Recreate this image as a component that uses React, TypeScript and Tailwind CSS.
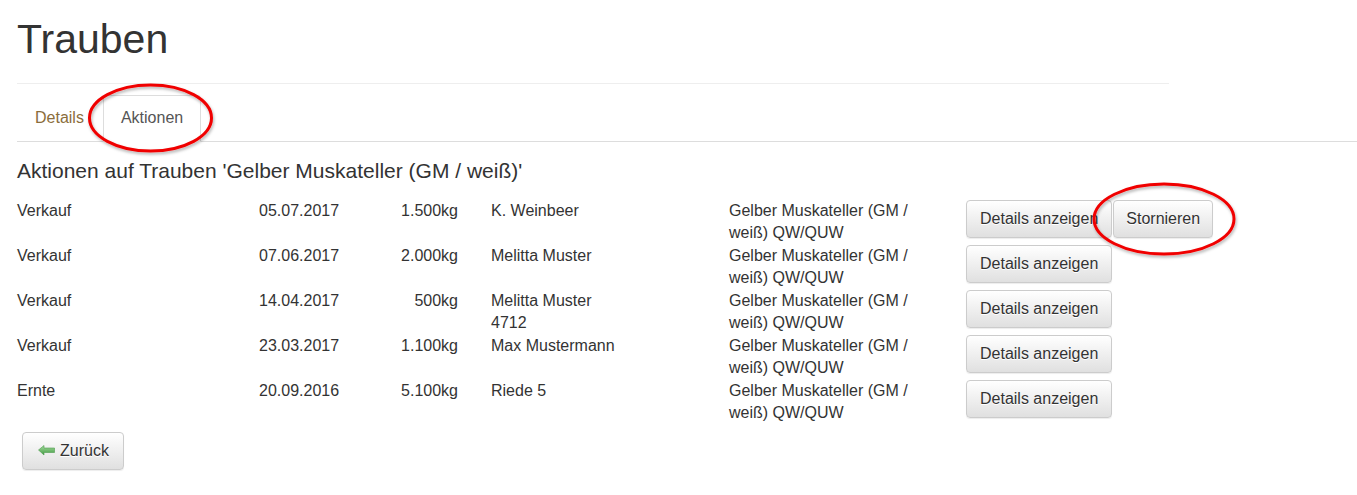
import React from 'react';

interface Aktion {
  art: string;
  datum: string;
  menge: string;
  partner: string[];
  sorte: string;
  stornierbar?: boolean;
}

const aktionen: Aktion[] = [
  { art: 'Verkauf', datum: '05.07.2017', menge: '1.500kg', partner: ['K. Weinbeer'], sorte: 'Gelber Muskateller (GM / weiß) QW/QUW', stornierbar: true },
  { art: 'Verkauf', datum: '07.06.2017', menge: '2.000kg', partner: ['Melitta Muster'], sorte: 'Gelber Muskateller (GM / weiß) QW/QUW' },
  { art: 'Verkauf', datum: '14.04.2017', menge: '500kg', partner: ['Melitta Muster', '4712'], sorte: 'Gelber Muskateller (GM / weiß) QW/QUW' },
  { art: 'Verkauf', datum: '23.03.2017', menge: '1.100kg', partner: ['Max Mustermann'], sorte: 'Gelber Muskateller (GM / weiß) QW/QUW' },
  { art: 'Ernte', datum: '20.09.2016', menge: '5.100kg', partner: ['Riede 5'], sorte: 'Gelber Muskateller (GM / weiß) QW/QUW' },
];

// bootstrap-theme style default button
const btn =
  'inline-flex items-center rounded-[4px] border border-[#ccc] bg-gradient-to-b from-white to-[#e0e0e0] py-[7px] text-[16px] leading-[22px] text-[#333] shadow-[inset_0_1px_0_rgba(255,255,255,0.15),0_1px_1px_rgba(0,0,0,0.075)] [text-shadow:0_1px_0_#fff]';

const ArrowLeft = () => (
  <svg width="17" height="11" viewBox="0 0 17 11" className="mr-[5px]">
    <defs>
      <linearGradient id="arrowGreen" x1="0" y1="0" x2="0" y2="1">
        <stop offset="0" stopColor="#a6dca0" />
        <stop offset="1" stopColor="#3f9a3f" />
      </linearGradient>
    </defs>
    <polygon points="0.5,5 6,0.5 6,3 16.5,3 16.5,7.5 6,7.5 6,10" fill="url(#arrowGreen)" stroke="#4d9b4d" strokeWidth="0.6" />
  </svg>
);

const Markierungen = () => (
  <svg className="pointer-events-none absolute left-0 top-0" width="1357" height="495">
    <defs>
      <filter id="schatten" x="-20%" y="-20%" width="140%" height="140%">
        <feDropShadow dx="1" dy="2" stdDeviation="1.5" floodColor="#000" floodOpacity="0.3" />
      </filter>
    </defs>
    <ellipse cx="150.5" cy="118" rx="61" ry="33" fill="none" stroke="#f00000" strokeWidth="3" filter="url(#schatten)" />
    <ellipse cx="1164" cy="219" rx="70" ry="35" fill="none" stroke="#f00000" strokeWidth="3" filter="url(#schatten)" />
  </svg>
);

export default function App() {
  return (
    <div className="relative min-h-[495px] bg-white pl-[17px] pt-[17px] text-[16px] leading-[22.857px] text-[#333] [font-family:'Liberation_Sans',Arial,sans-serif]">
      <div className="w-[1152px] border-b border-[#eee] pb-[22px]">
        <h1 className="text-[41px] leading-[44px] font-normal">Trauben</h1>
      </div>

      <ul className="mt-[11px] flex border-b border-[#ddd]">
        <li className="mr-[2px] -mb-px">
          <a className="block border border-transparent pl-[17px] pr-[16px] py-[11px] text-[#8a6d3b]">Details</a>
        </li>
        <li className="-mb-px">
          <a className="block rounded-t-[4px] border border-[#ddd] border-b-white bg-white px-[17px] py-[11px] text-[#555]">Aktionen</a>
        </li>
      </ul>

      <h3 className="mt-[17px] text-[21px] leading-[23px] font-normal">
        Aktionen auf Trauben 'Gelber Muskateller (GM / weiß)'
      </h3>

      <div className="mt-[18px] leading-[22.5px]">
        {aktionen.map((a, i) => (
          <div key={i} className="grid grid-cols-[242px_110px_89px_33px_238px_237px_auto] items-start">
            <div>{a.art}</div>
            <div>{a.datum}</div>
            <div className="text-right">{a.menge}</div>
            <div />
            <div>
              {a.partner.map((p) => (
                <div key={p}>{p}</div>
              ))}
            </div>
            <div className="pr-[30px]">{a.sorte}</div>
            <div className="flex gap-[1px]">
              <button className={btn + ' px-[13px]'}>Details anzeigen</button>
              {a.stornierbar && <button className={btn + ' px-[12px]'}>Stornieren</button>}
            </div>
          </div>
        ))}
      </div>

      <div className="ml-[5px] mt-[7px]">
        <button className={btn + ' pl-[15px] pr-[14px]'}>
          <ArrowLeft />
          Zurück
        </button>
      </div>

      <Markierungen />
    </div>
  );
}
